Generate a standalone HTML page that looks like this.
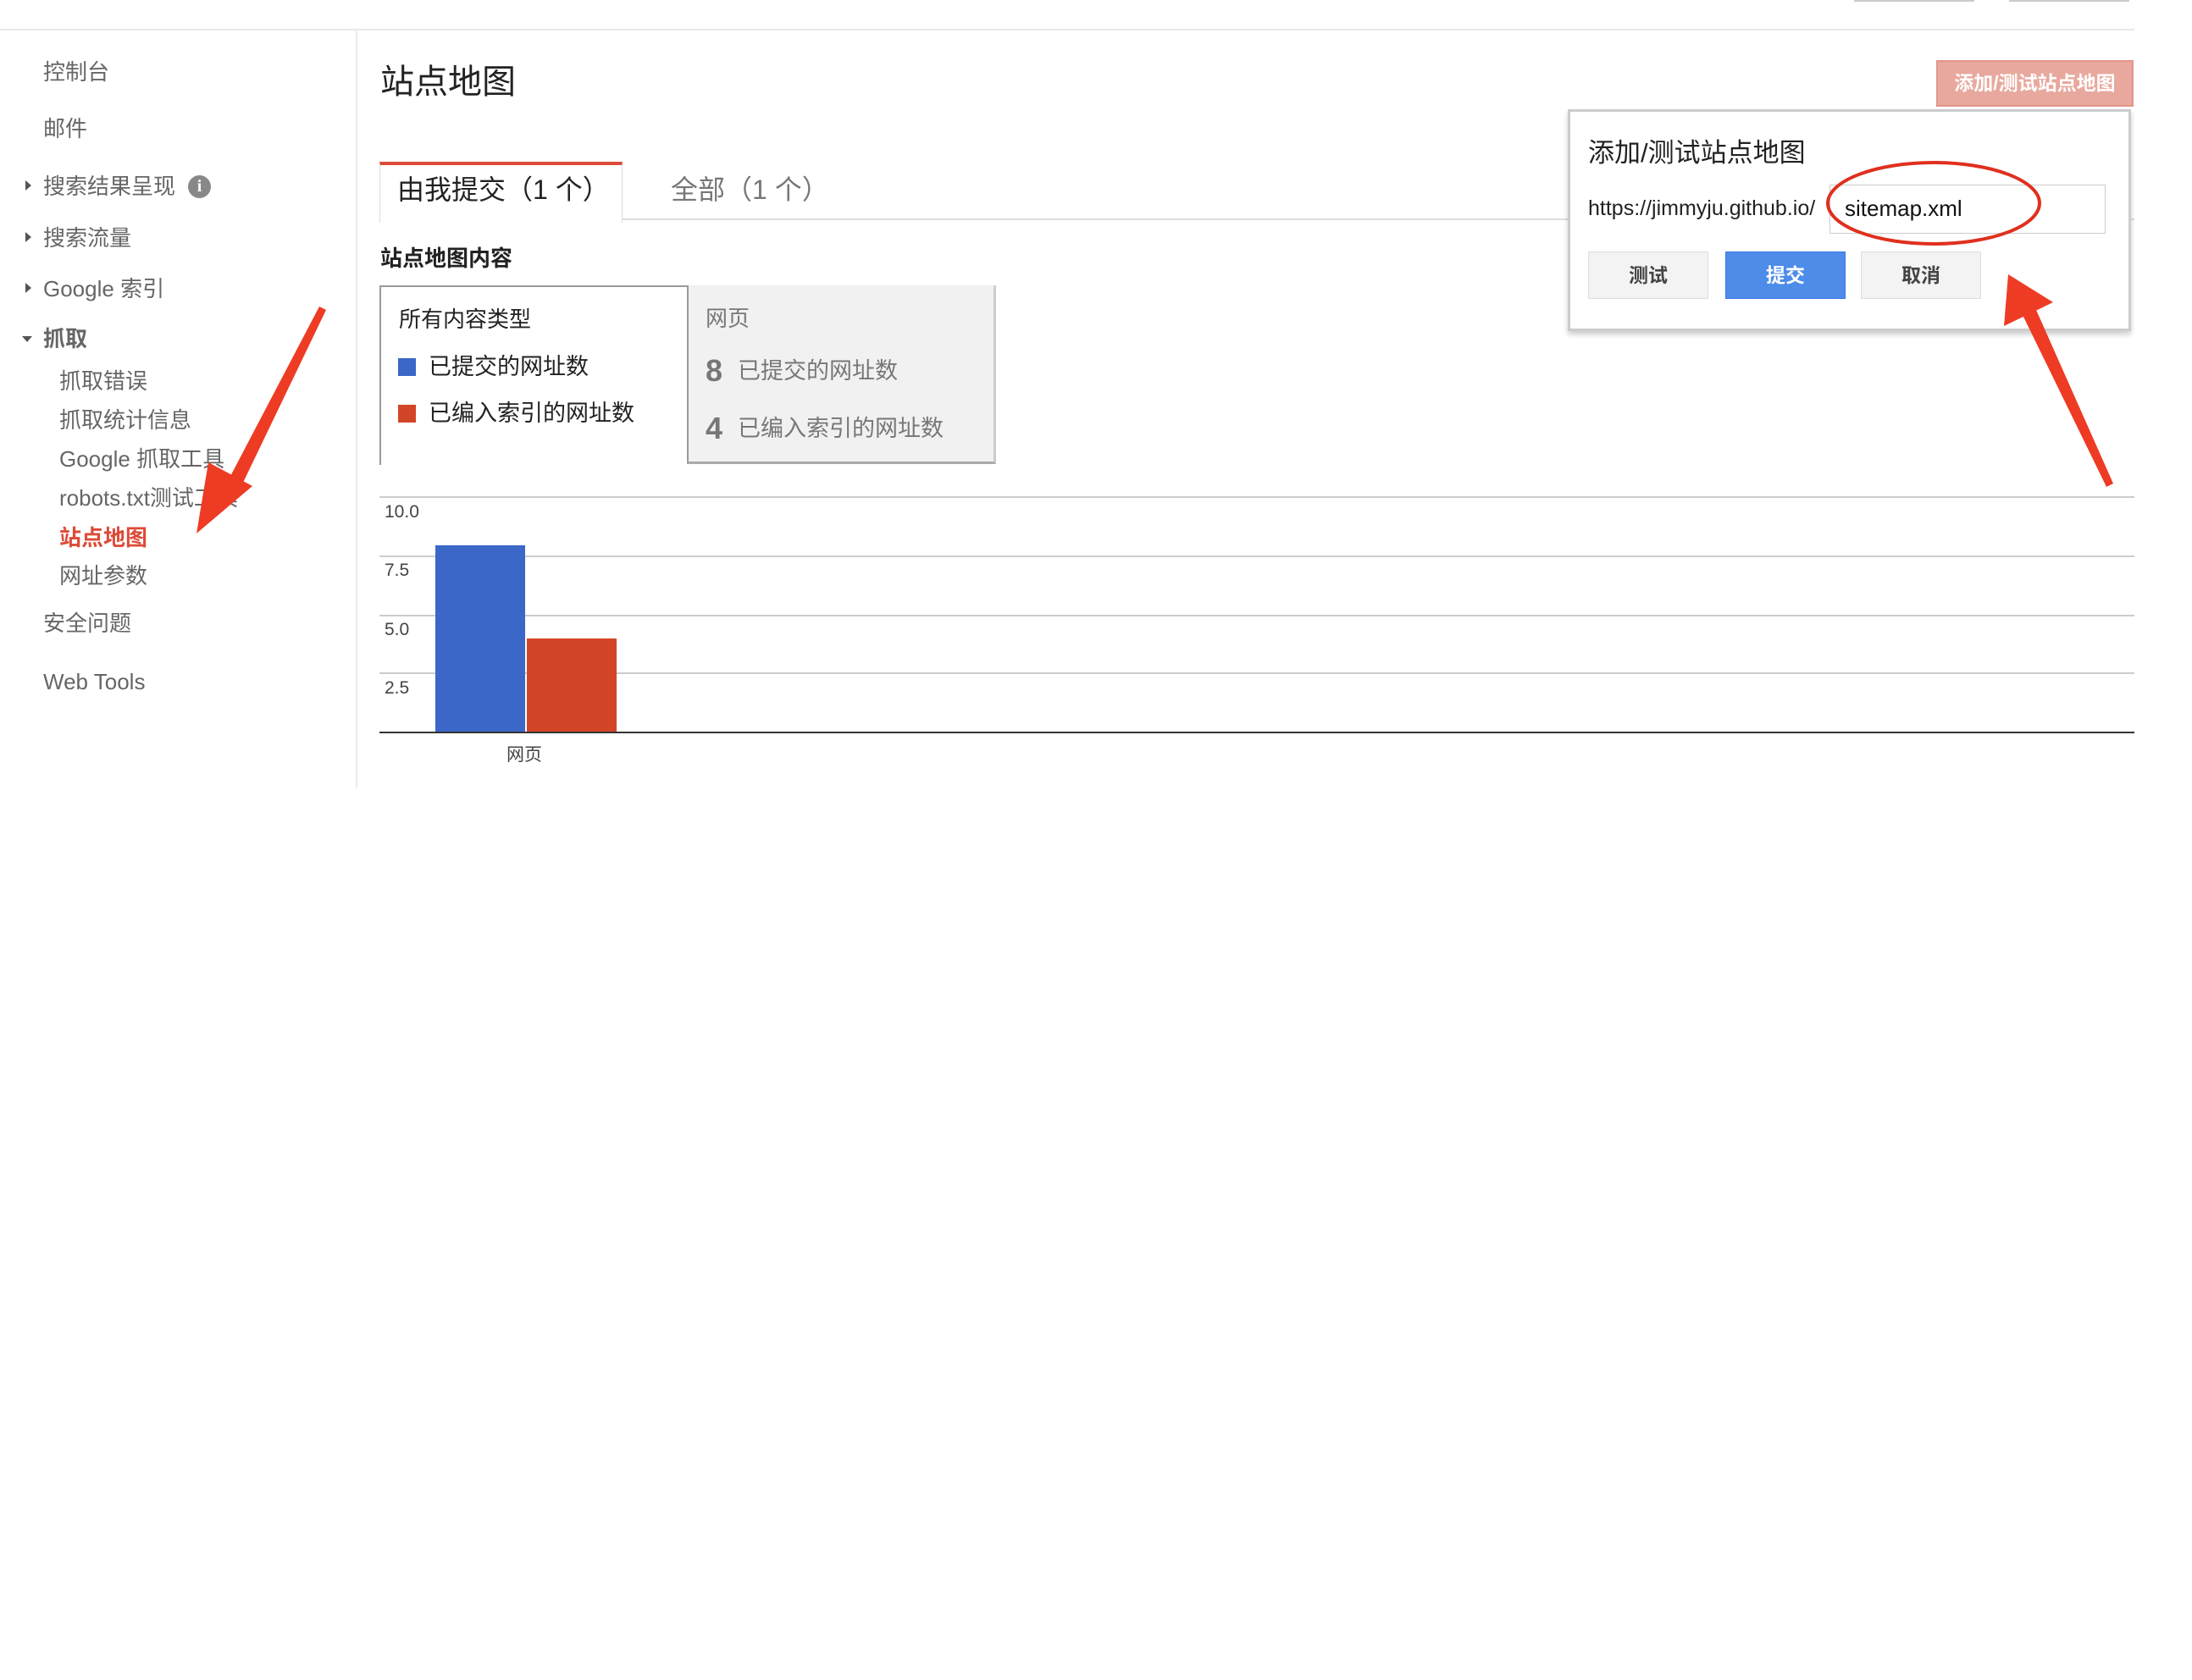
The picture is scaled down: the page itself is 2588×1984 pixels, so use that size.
<!DOCTYPE html>
<html><head><meta charset="utf-8"><style>
body{margin:0;width:2588px;height:1984px;background:#fff;position:relative;overflow:hidden;font-family:"Liberation Sans","Noto Sans CJK SC",sans-serif;}
.a{position:absolute;white-space:nowrap;line-height:1;}
.s{font-size:26px;color:#666;transform:translateY(-50%);}
.tri{position:absolute;width:0;height:0;}
</style></head><body>
<div style="position:absolute;left:0;top:34px;width:2520px;height:2px;background:#e8e8e8"></div>
<div style="position:absolute;left:2189px;top:0;width:142px;height:2px;background:#ccc"></div>
<div style="position:absolute;left:2372px;top:0;width:142px;height:2px;background:#ccc"></div>
<div style="position:absolute;left:420px;top:36px;width:2px;height:894px;background:#ebebeb"></div>

<div class="a s" style="left:51px;top:85px">控制台</div>
<div class="a s" style="left:51px;top:152px">邮件</div>
<div class="tri" style="left:30px;top:213px;border-left:7px solid #555;border-top:6px solid transparent;border-bottom:6px solid transparent"></div>
<div class="a s" style="left:51px;top:220px">搜索结果呈现</div>
<div style="position:absolute;left:222px;top:207px;width:27px;height:27px;border-radius:50%;background:#888;color:#fff;font:bold 20px 'Liberation Serif',serif;text-align:center;line-height:27px">i</div>
<div class="tri" style="left:30px;top:274px;border-left:7px solid #555;border-top:6px solid transparent;border-bottom:6px solid transparent"></div>
<div class="a s" style="left:51px;top:281px">搜索流量</div>
<div class="tri" style="left:30px;top:334px;border-left:7px solid #555;border-top:6px solid transparent;border-bottom:6px solid transparent"></div>
<div class="a s" style="left:51px;top:341px">Google 索引</div>
<div class="tri" style="left:26px;top:397px;border-top:7px solid #555;border-left:6px solid transparent;border-right:6px solid transparent"></div>
<div class="a s" style="left:51px;top:400px;font-weight:bold">抓取</div>
<div class="a s" style="left:70px;top:450px">抓取错误</div>
<div class="a s" style="left:70px;top:496px">抓取统计信息</div>
<div class="a s" style="left:70px;top:542px">Google 抓取工具</div>
<div class="a s" style="left:70px;top:588px">robots.txt测试工具</div>
<div class="a s" style="left:70px;top:635px;color:#dd4b39;font-weight:bold">站点地图</div>
<div class="a s" style="left:70px;top:680px">网址参数</div>
<div class="a s" style="left:51px;top:736px">安全问题</div>
<div class="a s" style="left:51px;top:805px">Web Tools</div>

<div class="a" style="left:449px;top:77px;font-size:40px;color:#222">站点地图</div>
<div style="position:absolute;left:2286px;top:71px;width:229px;height:51px;background:#e8a89d;border:2px solid #e4958a;color:#fff;font-weight:bold;font-size:23px;text-align:center;line-height:51px">添加/测试站点地图</div>

<div style="position:absolute;left:448px;top:258px;width:2072px;height:2px;background:#ddd"></div>
<div style="position:absolute;left:448px;top:191px;width:285px;height:68px;border:1px solid #ddd;border-bottom:none;border-top:4px solid #dd4b39;background:#fff"></div>
<div class="a" style="left:469px;top:208px;font-size:32px;color:#222">由我提交（1 个）</div>
<div class="a" style="left:792px;top:208px;font-size:32px;color:#777">全部（1 个）</div>

<div class="a" style="left:449px;top:292px;font-size:26px;font-weight:bold;color:#222">站点地图内容</div>
<div style="position:absolute;left:448px;top:337px;width:362px;height:210px;border-left:2px solid #999;border-top:2px solid #999"></div>
<div style="position:absolute;left:811px;top:337px;width:360px;height:208px;background:#f1f1f1;border-right:3px solid #ccc;border-bottom:3px solid #aaa;border-left:2px solid #999"></div>
<div class="a" style="left:471px;top:364px;font-size:26px;color:#222">所有内容类型</div>
<div style="position:absolute;left:470px;top:423px;width:21px;height:21px;background:#3a67c8"></div>
<div class="a" style="left:506px;top:420px;font-size:27px;color:#222">已提交的网址数</div>
<div style="position:absolute;left:470px;top:478px;width:21px;height:21px;background:#d24627"></div>
<div class="a" style="left:506px;top:475px;font-size:27px;color:#222">已编入索引的网址数</div>
<div class="a" style="left:833px;top:363px;font-size:26px;color:#777">网页</div>
<div class="a" style="left:833px;top:420px;font-size:36px;font-weight:bold;color:#777">8</div>
<div class="a" style="left:871px;top:425px;font-size:27px;color:#777">已提交的网址数</div>
<div class="a" style="left:833px;top:488px;font-size:36px;font-weight:bold;color:#777">4</div>
<div class="a" style="left:871px;top:493px;font-size:27px;color:#777">已编入索引的网址数</div>

<div style="position:absolute;left:448px;top:586px;width:2072px;height:2px;background:#ccc"></div>
<div style="position:absolute;left:448px;top:656px;width:2072px;height:2px;background:#ccc"></div>
<div style="position:absolute;left:448px;top:726px;width:2072px;height:2px;background:#ccc"></div>
<div style="position:absolute;left:448px;top:794px;width:2072px;height:2px;background:#ccc"></div>
<div style="position:absolute;left:448px;top:864px;width:2072px;height:2px;background:#333"></div>
<div class="a" style="left:454px;top:594px;font-size:21px;color:#444">10.0</div>
<div class="a" style="left:454px;top:663px;font-size:21px;color:#444">7.5</div>
<div class="a" style="left:454px;top:733px;font-size:21px;color:#444">5.0</div>
<div class="a" style="left:454px;top:802px;font-size:21px;color:#444">2.5</div>
<div style="position:absolute;left:514px;top:644px;width:106px;height:220px;background:#3a67c8"></div>
<div style="position:absolute;left:622px;top:754px;width:106px;height:110px;background:#d24627"></div>
<div class="a" style="left:598px;top:881px;font-size:21px;color:#444">网页</div>

<div style="position:absolute;left:1851px;top:129px;width:659px;height:256px;border:3px solid #ccc;background:#fff;box-shadow:0 4px 6px rgba(0,0,0,.2)"></div>
<div class="a" style="left:1875px;top:165px;font-size:31px;color:#222">添加/测试站点地图</div>
<div class="a" style="left:1875px;top:234px;font-size:25px;color:#222">https://jimmyju.github.io/</div>
<div style="position:absolute;left:2160px;top:218px;width:324px;height:56px;border:1px solid #ccc;background:#fff"></div>
<div class="a" style="left:2178px;top:233px;font-size:26px;color:#111">sitemap.xml</div>
<div style="position:absolute;left:1875px;top:297px;width:140px;height:54px;border:1px solid #ddd;background:#f3f3f3;color:#444;font-weight:bold;font-size:23px;text-align:center;line-height:54px">测试</div>
<div style="position:absolute;left:2037px;top:297px;width:140px;height:54px;border:1px solid #3b78e7;background:#4d8ce8;color:#fff;font-weight:bold;font-size:23px;text-align:center;line-height:54px">提交</div>
<div style="position:absolute;left:2197px;top:297px;width:140px;height:54px;border:1px solid #ddd;background:#f3f3f3;color:#444;font-weight:bold;font-size:23px;text-align:center;line-height:54px">取消</div>

<svg style="position:absolute;left:0;top:0" width="2588" height="1984">
<ellipse cx="2283" cy="240" rx="125" ry="48" fill="none" stroke="#e0301e" stroke-width="4"/>
<polygon points="377,362 385,366 284,576 268,570" fill="#ee3b24"/>
<polygon points="232,630 246,546 298,574" fill="#ee3b24"/>
<polygon points="2487,575 2495,571 2404,366 2388,372" fill="#ee3b24"/>
<polygon points="2371,324 2366,385 2424,357" fill="#ee3b24"/>
</svg>
</body></html>
